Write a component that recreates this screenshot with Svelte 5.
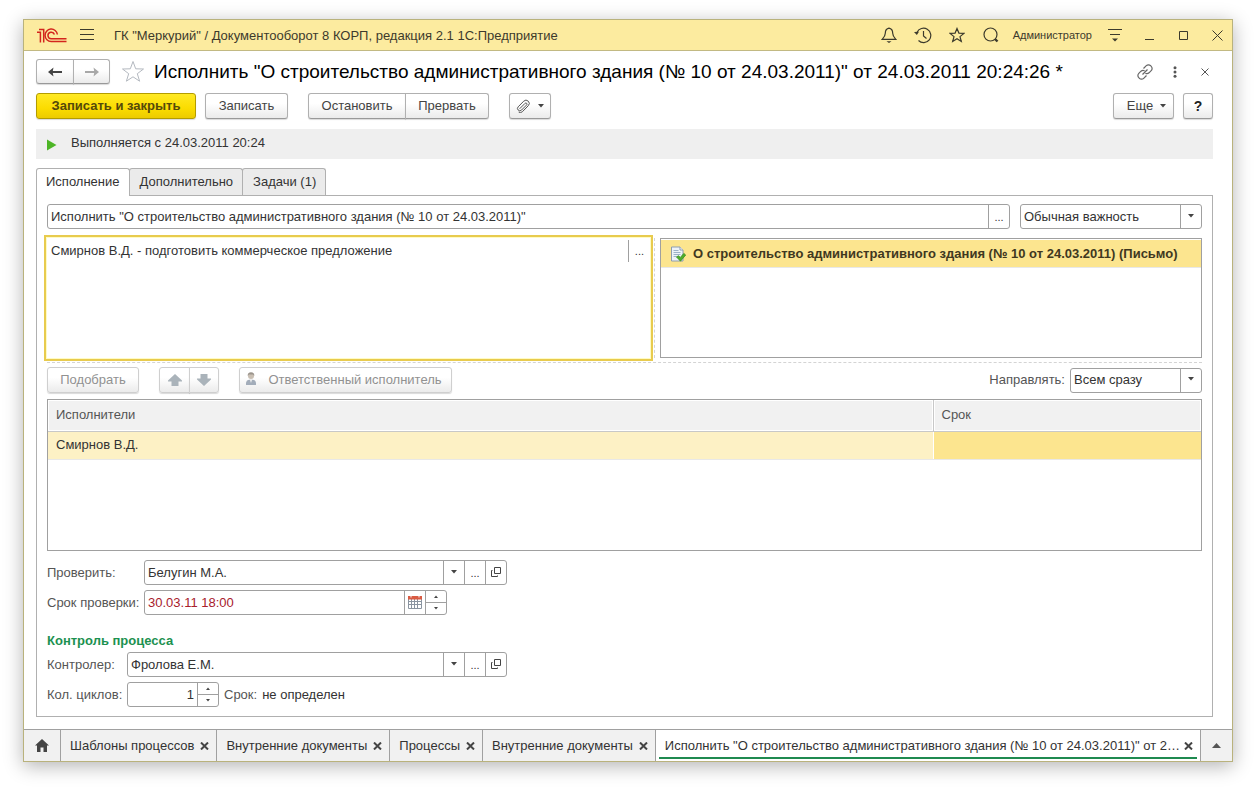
<script>
  const appTitle = 'ГК "Меркурий" / Документооборот 8 КОРП, редакция 2.1 1С:Предприятие';

  let subject = $state('Исполнить "О строительство административного здания (№ 10 от 24.03.2011)"');
  let description = $state("Смирнов В.Д. - подготовить коммерческое предложение");
  let importance = $state("Обычная важность");
  let direction = $state("Всем сразу");
  let reviewer = $state("Белугин М.А.");
  let reviewDate = $state("30.03.11 18:00");
  let controller = $state("Фролова Е.М.");
  let cycles = $state(1);
  let activePage = $state(0);

  const pages = ["Исполнение", "Дополнительно", "Задачи (1)"];
  const performers = [{ name: "Смирнов В.Д.", due: "" }];

  let windows = $state([
    { id: 1, name: "Шаблоны процессов" },
    { id: 2, name: "Внутренние документы" },
    { id: 3, name: "Процессы" },
    { id: 4, name: "Внутренние документы" },
  ]);

  const closeWindow = (id) => {
    windows = windows.filter((w) => w.id !== id);
  };
</script>

{#snippet caret()}
  <svg class="caret" width="6" height="4" viewBox="0 0 6 4"><path d="M0 0h6L3 3.5z" fill="#444" /></svg>
{/snippet}

{#snippet cross()}
  <svg width="9" height="8" viewBox="0 0 9 8" stroke="#444" stroke-width="2"><path d="M1 .5l7 7M8 .5l-7 7" /></svg>
{/snippet}

{#snippet spinner(step)}
  <span class="spinner">
    <button aria-label="Увеличить" onclick={() => step(1)}>
      <svg width="4" height="3" viewBox="0 0 4 3"><path d="M0 3h4L2 .5z" fill="#444" /></svg>
    </button>
    <button aria-label="Уменьшить" onclick={() => step(-1)}>
      <svg width="4" height="3" viewBox="0 0 4 3"><path d="M0 0h4L2 2.5z" fill="#444" /></svg>
    </button>
  </span>
{/snippet}

{#snippet refButtons()}
  <button class="part" aria-label="Список">{@render caret()}</button>
  <button class="part dots" aria-label="Выбрать">...</button>
  <button class="part" aria-label="Открыть">
    <svg width="11" height="11" viewBox="0 0 11 11" fill="none" stroke="#444">
      <path d="M3.5 .5h6v6h-6zM1.5 3.5h-1v6h6v-1" />
    </svg>
  </button>
{/snippet}

<div class="window">
  <header class="titlebar">
    <svg class="logo" width="30" height="15" viewBox="0 0 30 15" fill="none" stroke="#d3251d" stroke-width="1.5">
      <path d="M0 4.2h3.4V14.500M2 1.500h4.700V14.500" />
      <path d="M20.400 6.500A6.200 6.200 0 1 0 14.200 13.500H29.500" />
      <path d="M17.400 6.500A3.300 3.300 0 1 0 14.200 10.800H29.500" />
    </svg>
    <button class="icon menu" aria-label="Меню">
      <svg width="14" height="12" viewBox="0 0 14 12" stroke="#3c3a2c"><path d="M0 .5h14M0 5.500h14M0 10.500h14" /></svg>
    </button>
    <span class="app-title">{appTitle}</span>
    <div class="tools">
      <button class="icon" aria-label="Уведомления">
        <svg width="16" height="17" viewBox="0 0 16 17" fill="none" stroke="#3c3a2c" stroke-width="1.2">
          <path d="M8 1.200c-2.800.6-3.700 2.800-3.700 5C4.300 9 3 10.500 1.200 12.400h13.600C13 10.500 11.700 9 11.700 6.200c0-2.200-.9-4.400-3.700-5z" />
          <path d="M5.500 14.200h5L8 16z" fill="#3c3a2c" stroke="none" />
        </svg>
      </button>
      <button class="icon" aria-label="История">
        <svg width="18" height="17" viewBox="0 0 18 17" fill="none" stroke="#3c3a2c" stroke-width="1.200">
          <path d="M3 5.500A7.200 7.200 0 1 1 4.500 13.500M9.500 4v5l3 2.500" />
          <path d="M0 5l5-.2L2.800 8z" fill="#3c3a2c" stroke="none" />
        </svg>
      </button>
      <button class="icon" aria-label="Избранное">
        <svg width="16" height="16" viewBox="0 0 16 16" fill="none" stroke="#3c3a2c" stroke-width="1.200">
          <path d="M8 1.500l1.900 4.600 5 .3-3.900 3.200 1.300 4.900L8 11.800l-4.300 2.700L5 9.600 1.100 6.400l5-.3z" />
        </svg>
      </button>
      <button class="icon" aria-label="Поиск">
        <svg width="16" height="16" viewBox="0 0 16 16" fill="none" stroke="#3c3a2c" stroke-width="1.200">
          <circle cx="7.500" cy="7.500" r="6.500" /><path d="M12 12l2.500 2.500" stroke-width="2.400" />
        </svg>
      </button>
      <span class="user">Администратор</span>
      <button class="icon" aria-label="Сервис">
        <svg width="14" height="14" viewBox="0 0 14 14" stroke="#3c3a2c">
          <path d="M0 1.500h14M2 6.500h10" /><path d="M4 10.500h6L7 13.500z" fill="#3c3a2c" stroke="none" />
        </svg>
      </button>
      <button class="icon" aria-label="Свернуть">
        <svg width="9" height="10" viewBox="0 0 9 10" stroke="#3c3a2c"><path d="M0 9.500h9" /></svg>
      </button>
      <button class="icon" aria-label="Развернуть">
        <svg width="9" height="9" viewBox="0 0 9 9" fill="none" stroke="#3c3a2c"><path d="M.5.5h8v8h-8z" /></svg>
      </button>
      <button class="icon" aria-label="Закрыть">
        <svg width="11" height="11" viewBox="0 0 11 11" stroke="#3c3a2c"><path d="M.5.5l10 10M10.500.5l-10 10" /></svg>
      </button>
    </div>
  </header>

  <main>
    <div class="heading">
      <div class="group nav">
        <button class="btn" aria-label="Назад">
          <svg width="14" height="10" viewBox="0 0 14 10" fill="#444"><path d="M0 5l5.500-4.500L4.800 4H14v2H4.800l.7 3.500z" /></svg>
        </button>
        <button class="btn" aria-label="Вперед">
          <svg width="14" height="10" viewBox="0 0 14 10" fill="#a8a8a8"><path d="M14 5L8.500.5 9.200 4H0v2h9.200l-.7 3.500z" /></svg>
        </button>
      </div>
      <button class="icon fav" aria-label="В избранное">
        <svg width="24" height="23" viewBox="0 0 24 23" fill="none" stroke="#b4b9c0">
          <path d="M12 1.500l2.700 7.300 7.800.2-6.200 4.700 2.300 7.500L12 16.800l-6.600 4.400 2.300-7.500L1.500 9l7.800-.2z" />
        </svg>
      </button>
      <h1>Исполнить "О строительство административного здания (№ 10 от 24.03.2011)" от 24.03.2011 20:24:26 *</h1>
      <div class="form-tools">
        <button class="icon" aria-label="Получить ссылку">
          <svg width="16" height="16" viewBox="0 0 16 16" fill="none" stroke="#666" stroke-width="1.200">
            <path d="M6.500 4.500l2.800-2.800a3 3 0 0 1 4.300 0l.6.6a3 3 0 0 1 0 4.300L12 8.800a3 3 0 0 1-3.600.4" />
            <path d="M9.500 11.500l-2.800 2.800a3 3 0 0 1-4.300 0l-.6-.6a3 3 0 0 1 0-4.300L4 7.200a3 3 0 0 1 3.600-.4M5.500 10.500l5-5" />
          </svg>
        </button>
        <button class="icon" aria-label="Дополнительные действия">
          <svg width="4" height="12" viewBox="0 0 4 12" fill="#555">
            <circle cx="2" cy="1.700" r="1.500" /><circle cx="2" cy="6" r="1.500" /><circle cx="2" cy="10.300" r="1.500" />
          </svg>
        </button>
        <button class="icon" aria-label="Закрыть форму">
          <svg width="8" height="8" viewBox="0 0 8 8" stroke="#555"><path d="M.5.5l7 7M7.500.5l-7 7" /></svg>
        </button>
      </div>
    </div>

    <div class="commands">
      <button class="btn primary">Записать и закрыть</button>
      <button class="btn save">Записать</button>
      <div class="group process">
        <button class="btn">Остановить</button>
        <button class="btn">Прервать</button>
      </div>
      <button class="btn attach" aria-label="Файлы">
        <svg width="14" height="14" viewBox="0 0 14 14" fill="none" stroke="#555">
          <path d="M3.600 9.800l5.500-5.500a1.100 1.100 0 0 1 1.600 1.600L5.500 11.100a2.300 2.300 0 0 1-3.300-3.300l5.500-5.600a3.200 3.200 0 0 1 4.600 4.500l-5.900 6a3 3 0 0 1-3.700.4" />
        </svg>
        {@render caret()}
      </button>
      <button class="btn more">Еще {@render caret()}</button>
      <button class="btn help">?</button>
    </div>

    <div class="status">
      <svg width="10" height="12" viewBox="0 0 10 12"><path d="M0 0.500l9.500 5.500L0 11.500z" fill="#4db526" /></svg>
      <span>Выполняется с 24.03.2011 20:24</span>
    </div>

    <div class="pages" role="tablist">
      {#each pages as page, i}
        <button role="tab" aria-selected={i === activePage} class:active={i === activePage} onclick={() => (activePage = i)}>{page}</button>
      {/each}
    </div>

    <section class="panel">
      <div class="row">
        <div class="field grow">
          <input aria-label="Наименование" bind:value={subject} />
          <button class="part dots" aria-label="Выбрать">...</button>
        </div>
        <div class="field importance">
          <select aria-label="Важность" bind:value={importance}>
            <option>Низкая важность</option>
            <option>Обычная важность</option>
            <option>Высокая важность</option>
          </select>
          <span class="part">{@render caret()}</span>
        </div>
      </div>

      <div class="split">
        <div class="description">
          <textarea aria-label="Описание" bind:value={description}></textarea>
          <button class="dots" aria-label="Выбрать">...</button>
        </div>
        <div class="divider"></div>
        <ul class="subjects">
          <li>
            <svg width="16" height="16" viewBox="0 0 16 16">
              <path d="M1.500 1h8.500l3 3v11H1.500z" fill="#eef3f8" stroke="#8c9db0" />
              <path d="M10 1v3h3" fill="#fff" stroke="#8c9db0" />
              <path d="M3.500 4.500h5M3.500 6.500h7M3.500 8.500h7M3.500 10.500h4" stroke="#9db2c8" />
              <path d="M6.500 11l2-1.300 1.800 1.700 3.500-4L15.700 9l-5.200 6.200z" fill="#4fae2b" stroke="#2f8a16" stroke-width=".7" />
            </svg>
            О строительство административного здания (№ 10 от 24.03.2011) (Письмо)
          </li>
        </ul>
      </div>

      <div class="row toolbar">
        <button class="btn pick" disabled>Подобрать</button>
        <div class="group move">
          <button class="btn" disabled aria-label="Вверх">
            <svg width="14" height="12" viewBox="0 0 14 12" fill="#aab3ba"><path d="M7 0l7 6.500v1h-3.500V12h-7V7.500H0v-1z" /></svg>
          </button>
          <button class="btn" disabled aria-label="Вниз">
            <svg width="14" height="12" viewBox="0 0 14 12" fill="#aab3ba"><path d="M7 12L0 5.500v-1h3.500V0h7v4.500H14v1z" /></svg>
          </button>
        </div>
        <button class="btn responsible" disabled>
          <svg width="10" height="16" viewBox="0 0 10 16">
            <path d="M0 13V10.500Q.5 8 3 7.800h4q2.500.2 3 2.700V13z" fill="#a3adba" />
            <path d="M3.800 7.500L5 11l1.200-3.500z" fill="#eee" />
            <circle cx="5" cy="4" r="3" fill="#c9bfb3" />
            <path d="M1.700 4Q1.500.3 5 .3T8.300 4L7 2.500H3z" fill="#9b948c" />
          </svg>
          Ответственный исполнитель
        </button>
        <label class="route" for="direction">Направлять:</label>
        <div class="field direction">
          <select id="direction" bind:value={direction}>
            <option>Всем сразу</option>
            <option>По очереди</option>
          </select>
          <span class="part">{@render caret()}</span>
        </div>
      </div>

      <div class="grid">
        <table>
          <thead>
            <tr><th>Исполнители</th><th class="due">Срок</th></tr>
          </thead>
          <tbody>
            {#each performers as p}
              <tr><td>{p.name}</td><td class="current">{p.due}</td></tr>
            {/each}
          </tbody>
        </table>
      </div>

      <div class="form">
        <label for="reviewer">Проверить:</label>
        <div class="field ref">
          <input id="reviewer" bind:value={reviewer} />
          {@render refButtons()}
        </div>
        <label for="review-date">Срок проверки:</label>
        <div class="field date">
          <input id="review-date" bind:value={reviewDate} />
          <button class="part" aria-label="Календарь">
            <svg width="14" height="16" viewBox="0 0 14 16">
              <path d="M.5 3.500h13v10H.5z" fill="#fff" stroke="#8a94a0" />
              <path d="M3.500 4v9M6.500 4v9M9.500 4v9M1 6.500h12M1 9.500h12" stroke="#8a94a0" />
              <path d="M0 1h14v3.500H0z" fill="#d95b43" /><path d="M3 1v1.500M11 1v1.500" stroke="#fff" />
            </svg>
          </button>
          {@render spinner(() => {})}
        </div>
      </div>

      <h2>Контроль процесса</h2>
      <div class="form control">
        <label for="controller">Контролер:</label>
        <div class="field ref">
          <input id="controller" bind:value={controller} />
          {@render refButtons()}
        </div>
        <label for="cycles">Кол. циклов:</label>
        <div class="cycles">
          <div class="field count">
            <input id="cycles" bind:value={cycles} />
            {@render spinner((d) => (cycles = Math.max(0, Number(cycles) + d)))}
          </div>
          <span class="caption">Срок:</span>
          <span>не определен</span>
        </div>
      </div>
    </section>
  </main>

  <footer class="taskbar">
    <button class="home" aria-label="Начальная страница">
      <svg width="14" height="13" viewBox="0 0 14 13" fill="#444"><path d="M7 0l7 6.500h-2V13H8.500V8.500h-3V13H2V6.500H0L7 0z" /></svg>
    </button>
    {#each windows as w (w.id)}
      <div class="task">
        <button class="name">{w.name}</button>
        <button class="close" aria-label="Закрыть" onclick={() => closeWindow(w.id)}>{@render cross()}</button>
      </div>
    {/each}
    <div class="task active">
      <button class="name">{subject} от 24.03.2011 20:24:26 *</button>
      <button class="close" aria-label="Закрыть">{@render cross()}</button>
    </div>
    <button class="expand" aria-label="Все окна">
      <svg width="9" height="5" viewBox="0 0 9 5" fill="#555"><path d="M0 5h9L4.500 0z" /></svg>
    </button>
  </footer>
</div>

<style>
  :global(body) {
    background: #fff;
  }

  .window {
    margin: 19px 23px 27px;
    border: 1px solid #b9b27c;
    background: #fff;
    box-shadow: 0 4px 18px rgba(0, 0, 0, 0.3);
    font-family: "Liberation Sans", Arial, sans-serif;
    font-size: 13px;
    line-height: 16px;
    color: #333;
  }

  .window,
  .window * {
    box-sizing: border-box;
  }

  button,
  input,
  select,
  textarea {
    margin: 0;
    padding: 0;
    border: 0;
    background: none;
    font: inherit;
    color: inherit;
    outline: none;
    border-radius: 0;
  }

  svg {
    display: block;
    flex: none;
  }

  .icon {
    width: 30px;
    height: 30px;
    display: flex;
    align-items: center;
    justify-content: center;
  }

  .titlebar {
    display: flex;
    align-items: center;
    height: 31px;
    padding-left: 13px;
    background: #fceb9f;
    border-bottom: 1px solid #c2b983;
  }

  .menu {
    margin-left: 5px;
  }

  .app-title {
    margin-left: 12px;
    padding-top: 1px;
    color: #3c3a2c;
  }

  .tools {
    display: flex;
    align-items: center;
    gap: 4px;
    margin-left: auto;
  }

  .user {
    padding: 0 4px 0 3px;
    font-size: 11px;
    color: #3c3a2c;
  }

  main {
    padding: 8px 19px 12px 12px;
  }

  .heading {
    display: flex;
    align-items: center;
    height: 25px;
  }

  .fav {
    margin-left: 8px;
  }

  h1 {
    margin: 0 0 0 6px;
    font-size: 19px;
    line-height: 24px;
    font-weight: normal;
    color: #000;
    white-space: nowrap;
  }

  .form-tools {
    display: flex;
    margin: 0 -7px 0 auto;
  }

  .btn {
    display: flex;
    align-items: center;
    justify-content: center;
    height: 26px;
    border: 1px solid #b0b0b0;
    border-bottom-color: #999;
    border-radius: 3px;
    background: linear-gradient(#fff 40%, #ebebeb);
    box-shadow: 0 1px 1px rgba(0, 0, 0, 0.15);
    color: #444;
    white-space: nowrap;
  }

  .btn:disabled {
    color: #919191;
    border-color: #cfcfcf;
  }

  .primary {
    width: 160px;
    border-color: #b39c00;
    background: linear-gradient(#ffe924, #fbdc00 60%, #eccb00);
    font-weight: bold;
    color: #54490a;
  }

  .group {
    display: flex;
  }

  .group .btn:first-child {
    border-radius: 3px 0 0 3px;
  }

  .group .btn:last-child {
    margin-left: -1px;
    border-radius: 0 3px 3px 0;
  }

  .nav .btn {
    width: 37px;
    height: 25px;
  }

  .nav .btn:first-child {
    width: 38px;
  }

  .commands {
    display: flex;
    margin-top: 9px;
  }

  .save {
    width: 83px;
    margin-left: 9px;
  }

  .process {
    margin: 0 20px;
  }

  .process .btn:first-child {
    width: 98px;
  }

  .process .btn:last-child {
    width: 84px;
  }

  .attach {
    gap: 8px;
    width: 42px;
  }

  .more {
    gap: 7px;
    width: 61px;
    padding-left: 6px;
    margin-left: auto;
  }

  .help {
    width: 30px;
    margin-left: 9px;
    font-size: 14px;
    font-weight: bold;
    color: #222;
  }

  .status {
    display: flex;
    align-items: center;
    gap: 14px;
    height: 30px;
    margin-top: 10px;
    padding: 0 11px 2px;
    background: #efefef;
  }

  .status svg {
    margin-top: 4px;
  }

  .pages {
    display: flex;
    margin-top: 9px;
  }

  .pages button {
    height: 27px;
    padding: 0 9px;
    border: 1px solid #b0b0b0;
    border-bottom: 0;
    border-radius: 3px 3px 0 0;
    background: #ebebeb;
  }

  .pages button + button {
    margin-left: -1px;
    padding-left: 10px;
  }

  .pages .active {
    position: relative;
    height: 28px;
    margin-bottom: -1px;
    padding-bottom: 1px;
    background: #fff;
  }

  .panel {
    padding: 8px 10px 9px;
    border: 1px solid #b0b0b0;
  }

  .row {
    display: flex;
    align-items: center;
  }

  .field {
    display: flex;
    height: 25px;
    border: 1px solid #a0a0a0;
    border-radius: 3px;
    background: #fff;
  }

  .field input,
  .field select {
    flex: 1;
    min-width: 0;
    padding: 0 3px;
    appearance: none;
  }

  .grow {
    flex: 1;
    margin-right: 10px;
  }

  .part {
    display: flex;
    align-items: center;
    justify-content: center;
    width: 21px;
    border-left: 1px solid #a0a0a0;
  }

  .dots {
    font-size: 11px;
  }

  .field .caret {
    margin-bottom: 2px;
  }

  .importance {
    width: 182px;
  }

  .direction {
    width: 132px;
  }

  .split {
    display: flex;
    margin-top: 9px;
    padding-bottom: 4px;
    border-bottom: 1px dashed #d4d4d4;
  }

  .description {
    display: flex;
    flex: 604;
    height: 120px;
    outline: 2px solid #e8cb4e;
    outline-offset: 1px;
    box-shadow: 0 0 0 1px #fffbc4;
  }

  .description textarea {
    flex: 1;
    padding: 5px 4px;
    resize: none;
  }

  .description .dots {
    width: 22px;
    height: 22px;
    margin-top: 2px;
    border-left: 1px solid #a0a0a0;
  }

  .divider {
    margin: 0 5px 0 4px;
    border-left: 1px dashed #d4d4d4;
  }

  .subjects {
    flex: 541;
    margin: 0;
    padding: 1px 0;
    border: 1px solid #a0a0a0;
    list-style: none;
  }

  .subjects li {
    display: flex;
    align-items: center;
    gap: 7px;
    height: 28px;
    padding-left: 9px;
    border-bottom: 1px solid #e8e8e8;
    background: #fce58f;
    font-weight: bold;
    color: #40381f;
    white-space: nowrap;
    overflow: hidden;
  }

  .toolbar {
    margin: 4px 0 6px;
  }

  .pick {
    width: 92px;
  }

  .move {
    margin: 0 20px;
  }

  .move .btn:first-child {
    width: 31px;
  }

  .move .btn:last-child {
    width: 30px;
  }

  .responsible {
    gap: 12px;
    width: 213px;
    padding-right: 3px;
  }

  .route {
    margin: 0 5px 0 auto;
  }

  label,
  .caption {
    color: #555;
  }

  .grid {
    height: 152px;
    border: 1px solid #a0a0a0;
  }

  table {
    width: 100%;
    table-layout: fixed;
    border-collapse: collapse;
  }

  th,
  td {
    padding: 0 8px;
    text-align: left;
  }

  th {
    height: 31px;
    padding-bottom: 1px;
    border-bottom: 1px solid #c8c8c8;
    background: #f1f1f1;
    box-shadow: inset 0 0 0 1px #fff;
    font-weight: normal;
    color: #555;
  }

  .due {
    width: 268px;
    border-left: 1px solid #c8c8c8;
  }

  td {
    height: 28px;
    background: #fdf1c5;
    border-bottom: 1px solid #e8e8e8;
  }

  .current {
    background: #fce58f;
    border-left: 1px solid #fff;
  }

  .form {
    display: grid;
    grid-template-columns: 92px auto;
    justify-content: start;
    align-items: center;
    gap: 5px;
    margin-top: 9px;
  }

  .form label {
    white-space: nowrap;
  }

  .control {
    grid-template-columns: 75px auto;
    margin-top: 3px;
  }

  .ref {
    width: 363px;
  }

  .control .ref {
    width: 380px;
  }

  .date {
    width: 303px;
  }

  .date input {
    color: #a8202c;
  }

  .spinner {
    display: flex;
    flex-direction: column;
    width: 21px;
    border-left: 1px solid #a0a0a0;
  }

  .spinner button {
    display: flex;
    flex: 1;
    align-items: center;
    justify-content: center;
  }

  .spinner button + button {
    border-top: 1px solid #a0a0a0;
  }

  h2 {
    margin: 18px 0 0;
    font-size: 13px;
    line-height: 16px;
    color: #1c9150;
  }

  .cycles {
    display: flex;
    align-items: center;
    gap: 5px;
  }

  .count {
    width: 92px;
  }

  .count input {
    text-align: right;
  }

  .taskbar {
    display: flex;
    height: 32px;
    border-top: 1px solid #a0a0a0;
    background: #f1f1f1;
  }

  .home,
  .expand {
    display: flex;
    align-items: center;
    justify-content: center;
    width: 37px;
    border-right: 1px solid #a0a0a0;
  }

  .expand {
    width: 31px;
    border-right: 0;
  }

  .task {
    display: flex;
    align-items: center;
    gap: 6px;
    padding: 0 7px 0 9px;
    border-right: 1px solid #a0a0a0;
    white-space: nowrap;
  }

  .active.task {
    flex: 1;
    gap: 4px;
    min-width: 0;
    background: linear-gradient(#1f8a50, #1f8a50) center bottom 2px / calc(100% - 6px) 2px no-repeat #fff;
  }

  .active .name {
    flex: 1;
    min-width: 0;
    overflow: hidden;
    text-overflow: ellipsis;
    text-align: left;
  }
</style>
